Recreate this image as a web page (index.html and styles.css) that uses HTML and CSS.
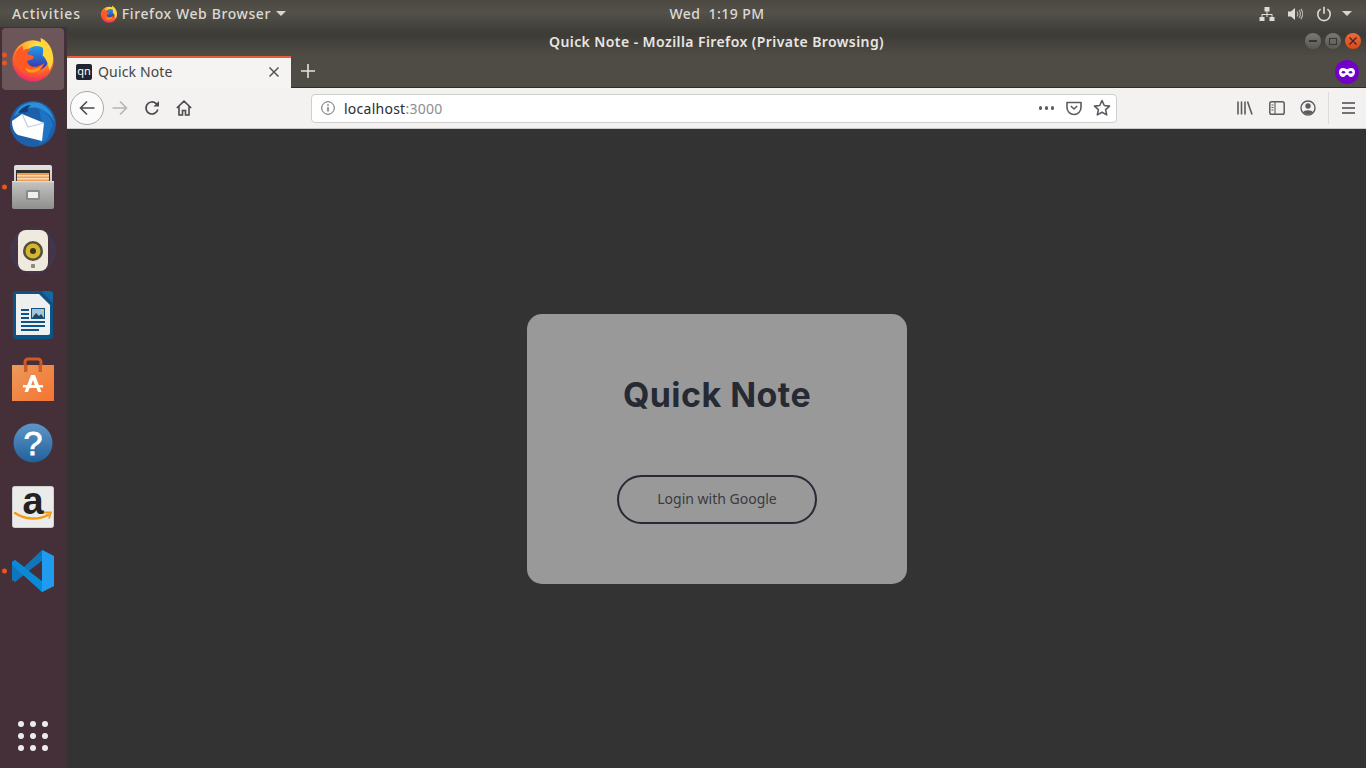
FILE: index.html
```html
<!DOCTYPE html>
<html lang="en">
<head>
<meta charset="utf-8">
<title>Quick Note</title>
<link rel="stylesheet" href="styles.css">
</head>
<body>
<svg class="defs" width="0" height="0" aria-hidden="true">
  <defs>
    <radialGradient id="ffg" cx="0.6" cy="0.15" r="0.95">
      <stop offset="0" stop-color="#ffe847"/>
      <stop offset="0.4" stop-color="#ffa930"/>
      <stop offset="0.7" stop-color="#ff5a2c"/>
      <stop offset="1" stop-color="#e31587"/>
    </radialGradient>
    <linearGradient id="ffb" x1="0" y1="0" x2="0" y2="1">
      <stop offset="0" stop-color="#1f9de6"/>
      <stop offset="1" stop-color="#3a2fa5"/>
    </linearGradient>
    <linearGradient id="drawer" x1="0" y1="0" x2="0" y2="1">
      <stop offset="0" stop-color="#c4c4c2"/>
      <stop offset="1" stop-color="#8f8f8d"/>
    </linearGradient>
    <linearGradient id="cabinet" x1="0" y1="0" x2="0" y2="1">
      <stop offset="0" stop-color="#e2e2e0"/>
      <stop offset="1" stop-color="#a8a8a6"/>
    </linearGradient>
    <linearGradient id="helpg" x1="0" y1="0" x2="0" y2="1">
      <stop offset="0" stop-color="#5d97c9"/>
      <stop offset="1" stop-color="#22609a"/>
    </linearGradient>
    <linearGradient id="bag" x1="0" y1="0" x2="1" y2="1">
      <stop offset="0" stop-color="#ec9a5c"/>
      <stop offset="1" stop-color="#f47430"/>
    </linearGradient>
    <symbol id="firefox" viewBox="0 0 48 48">
      <circle cx="24" cy="26" r="21.500" fill="url(#ffg)"/>
      <circle cx="28" cy="23" r="12.500" fill="url(#ffb)"/>
      <path d="M32 2c7 3 13 11 13 21 0 6-2 10-4 13-1-7-3-12-7-16 1-4 1-8-1-11-1-2-1-5-1-7z" fill="#ffd53a"/>
      <path d="M5 20c2-5 5-8 8-10l1 5c3-2 7-2 9-1-3 1-5 3-5 5 3 1 6 1 7 3-1 3-5 3-7 4 0 4 5 7 10 6 3-1 6-2 8-4-2 7-9 12-17 11C10 38 3 30 5 20z" fill="#ff5a24"/>
      <path d="M16 33c5 3 12 3 18-3-2 6-8 9-13 8-2 0-4-2-5-5z" fill="#ff9d1f"/>
    </symbol>
  </defs>
</svg>
<header class="topbar">
  <div class="topbar-left">
    <span class="top-item activities">Activities</span>
    <span class="top-item app-menu">
      <svg class="app-icon" width="18" height="18"><use href="#firefox"/></svg>
      Firefox Web Browser
      <i class="caret"></i>
    </span>
  </div>
  <div class="clock">Wed&nbsp;&nbsp;1:19 PM</div>
  <div class="topbar-right">
    <svg width="16" height="16" viewBox="0 0 16 16" fill="#dedcd8"><path d="M5.500 1h5v4.500h-5zM7.500 5.500h1V8h5v3h-1V9h-4v2h-1V9h-4v2h-1V8h5zM.5 11h5v4h-5zM10.500 11h5v4h-5z"/></svg>
    <svg width="16" height="16" viewBox="0 0 16 16" fill="none" stroke="#dedcd8"><path d="M1 5.500h3L8 2v12L4 10.500H1z" fill="#dedcd8" stroke="none"/><path d="M10 5.500c1 1.500 1 3.500 0 5M12 4c1.800 2.500 1.800 5.500 0 8M13.800 2.800c2.400 3.200 2.400 7.200 0 10.400" stroke-width="1.200" opacity=".7"/></svg>
    <svg class="power" width="16" height="16" viewBox="0 0 16 16" fill="none" stroke="#dedcd8" stroke-width="1.600"><path d="M4.600 3.200a6.200 6.200 0 1 0 6.800 0M8 .8v7"/></svg>
    <i class="caret end-caret"></i>
  </div>
</header>
<div class="desktop">
  <nav class="dock">
    <div class="dock-list">
      <div class="dock-item active">
        <span class="pips"><i></i><i></i></span>
        <svg width="46" height="46"><use href="#firefox"/></svg>
      </div>
      <div class="dock-item">
        <svg width="48" height="48" viewBox="0 0 48 48">
          <circle cx="24" cy="25" r="23" fill="#1d5fa8"/>
          <path d="M5 17C9 6 20 1 30 4c8 3 14 10 15 19-3-7-8-11-14-13-5-2-11-2-14 1z" fill="#2d8fd8"/>
          <path d="M30 9c7 3 12 9 14 17l-6 14c-3 3-6 4-8 5l4-14z" fill="#1e74c4"/>
          <path d="M9 14c3-5 8-8 13-8-3 2-4 5-3 7z" fill="#0e3e75"/>
          <path d="M3 22l10-7 22 9-2 18-24-6c-4-2-6-8-6-14z" fill="#fff"/>
          <path d="M13 15l6 13 16-4" fill="none" stroke="#c9cfd8" stroke-width="1.200"/>
        </svg>
      </div>
      <div class="dock-item">
        <span class="pips"><i></i></span>
        <svg width="44" height="44" viewBox="0 0 44 44">
          <rect x="3" y="0" width="38" height="42" rx="2" fill="url(#cabinet)"/>
          <rect x="5" y="5" width="34" height="14" fill="#35312e"/>
          <rect x="6" y="8" width="32" height="8" fill="#f19a52"/>
          <rect x="6" y="10" width="32" height="1.500" fill="#fbdcb8"/>
          <rect x="6" y="13" width="32" height="1.500" fill="#fbdcb8"/>
          <path d="M1 16h42v26a2 2 0 0 1-2 2H3a2 2 0 0 1-2-2z" fill="url(#drawer)"/>
          <rect x="1" y="16" width="42" height="1.200" fill="#dcdcda"/>
          <rect x="15" y="25" width="14" height="10" rx="1.500" fill="#8a8a88"/>
          <rect x="17" y="27" width="10" height="6" fill="#efefed"/>
        </svg>
      </div>
      <div class="dock-item">
        <svg width="48" height="48" viewBox="0 0 48 48">
          <circle cx="24" cy="24" r="23" fill="#3e3a55" opacity=".7"/>
          <circle cx="24" cy="24" r="19" fill="#4a3340"/>
          <rect x="9" y="3" width="30" height="41" rx="8" fill="#eeeade"/>
          <circle cx="24" cy="24" r="10" fill="#55503a"/>
          <circle cx="24" cy="24" r="7.500" fill="#d4b72a"/>
          <circle cx="24" cy="24" r="3" fill="#3a3520"/>
          <rect x="22" y="37" width="4" height="4" rx="1" fill="#8e8a80"/>
        </svg>
      </div>
      <div class="dock-item">
        <svg width="40" height="48" viewBox="0 0 40 48">
          <path d="M3 0h25l12 12v33a3 3 0 0 1-3 3H3a3 3 0 0 1-3-3V3a3 3 0 0 1 3-3z" fill="#0c5486"/>
          <path d="M28 0h9a3 3 0 0 1 3 3v9z" fill="#0f6aa8"/>
          <path d="M3 3h23l11 11v28a2 2 0 0 1-2 2H3z" fill="#eef0f0"/>
          <g fill="#0c5486">
            <rect x="8" y="18" width="8" height="2"/><rect x="8" y="22" width="8" height="2"/><rect x="8" y="26" width="8" height="2"/>
            <rect x="8" y="30" width="24" height="2"/><rect x="8" y="34" width="24" height="2"/><rect x="8" y="38" width="18" height="2"/>
            <rect x="18" y="17" width="14" height="11"/>
          </g>
          <rect x="19" y="18" width="12" height="9" fill="#9fc6dd"/>
          <path d="M19 27l4-5 3 3 2-2 3 4z" fill="#33424f"/>
          <circle cx="29" cy="20" r="1.200" fill="#f0c63a"/>
        </svg>
      </div>
      <div class="dock-item">
        <svg width="42" height="44" viewBox="0 0 42 44">
          <path d="M13 10V5a3 3 0 0 1 3-3h10a3 3 0 0 1 3 3v5" fill="none" stroke="#cf5a25" stroke-width="3"/>
          <path d="M0 8h42v36H0z" fill="url(#bag)"/>
          <path d="M12 8v7h3.500V8zM26.500 8v7H30V8z" fill="#cf5a25"/>
          <path d="M19 18h4l6.500 17h-3.500l-1.500-4h-7l-1.500 4H12.500zM21 23l-1.800 5h3.600z" fill="#fff"/>
          <rect x="11" y="28" width="20" height="2.500" fill="#fff"/>
        </svg>
      </div>
      <div class="dock-item">
        <svg width="40" height="40" viewBox="0 0 40 40">
          <circle cx="20" cy="20" r="19.500" fill="url(#helpg)"/>
          <text x="20" y="32" class="help-mark">?</text>
        </svg>
      </div>
      <div class="dock-item">
        <svg class="amazon" width="42" height="42" viewBox="0 0 42 42">
          <rect x=".5" y=".5" width="41" height="41" rx="2" fill="#ebebea" stroke="#d0d0d0"/>
          <text x="21" y="28" class="amazon-mark">a</text>
          <path d="M3 27c10 7 24 7 33 2" fill="none" stroke="#f59a14" stroke-width="2.400" stroke-linecap="round"/>
          <path d="M32 26.500l7 0-2 6" fill="none" stroke="#f59a14" stroke-width="1.800"/>
        </svg>
      </div>
      <div class="dock-item">
        <span class="pips"><i></i></span>
        <svg width="42" height="42" viewBox="0 0 42 42">
          <path d="M30 0l12 6v30l-12 6L12 25 3 32l-3-2v-18l3-2 9 7z" fill="#0f76bd"/>
          <path d="M30 0l12 6v30l-12 6z" fill="#1f9cf0"/>
          <path d="M30 11v20L17 21z" fill="#452f38"/>
          <path d="M0 12l3-2 27 21v11L0 15z" fill="#0a8ad6"/>
          <path d="M30 11v20L17 21z" fill="#452f38"/>
        </svg>
      </div>
    </div>
    <div class="app-grid"><i></i><i></i><i></i><i></i><i></i><i></i><i></i><i></i><i></i></div>
  </nav>
  <div class="window">
    <div class="titlebar">
      <span class="title">Quick Note - Mozilla Firefox (Private Browsing)</span>
      <div class="win-buttons">
        <span class="win-btn"><i class="glyph-min"></i></span>
        <span class="win-btn"><i class="glyph-max"></i></span>
        <span class="win-btn close">
          <svg width="10" height="10" viewBox="0 0 10 10" stroke="#3a2a22" stroke-width="1.300"><path d="M1.500 1.500l7 7M8.500 1.500l-7 7"/></svg>
        </span>
      </div>
    </div>
    <div class="tabstrip">
      <div class="tab">
        <span class="favicon">qn</span>
        <span class="tab-title">Quick Note</span>
        <svg class="tab-close" width="12" height="12" viewBox="0 0 12 12" stroke="#555" stroke-width="1.500"><path d="M1.500 1.500l9 9M10.500 1.500l-9 9"/></svg>
      </div>
      <svg class="new-tab" width="14" height="14" viewBox="0 0 14 14" stroke="#e4e2de" stroke-width="1.600"><path d="M7 0v14M0 7h14"/></svg>
      <span class="private">
        <svg width="16" height="9" viewBox="0 0 18 10" fill="#fff"><path d="M4.500 0C7 0 7.500 1.200 9 1.200S11 0 13.500 0C16.500 0 18 2 18 4.500S16.500 10 13.500 10C11 10 10.500 7.500 9 7.500S7 10 4.500 10C1.500 10 0 7 0 4.500S1.500 0 4.500 0z"/><ellipse cx="5" cy="4.800" rx="2" ry="1.400" fill="#7200c9"/><ellipse cx="13" cy="4.800" rx="2" ry="1.400" fill="#7200c9"/></svg>
      </span>
    </div>
    <div class="navbar">
      <span class="back">
        <svg width="16" height="16" viewBox="0 0 16 16" fill="none" stroke="#4a4a4f" stroke-width="1.600"><path d="M15.500 8H1.500M8 1.500L1.500 8 8 14.500"/></svg>
      </span>
      <svg class="forward" width="16" height="16" viewBox="0 0 16 16" fill="none" stroke="#b5b5b5" stroke-width="1.600"><path d="M.5 8h14M8 1.500L14.500 8 8 14.500"/></svg>
      <svg class="reload" width="16" height="16" viewBox="0 0 16 16" fill="none" stroke="#4a4a4f" stroke-width="1.700"><path d="M13.800 9.500A6 6 0 1 1 12 3.500l2 2"/><path d="M15 1v5.500H9.500z" fill="#4a4a4f" stroke="none"/></svg>
      <svg class="home" width="16" height="16" viewBox="0 0 16 16" fill="none" stroke="#4a4a4f" stroke-width="1.600"><path d="M.8 8L8 1.200 15.200 8M3 6.500V15h3.500v-4.500h3V15H13V6.500"/></svg>
      <div class="urlbar">
        <svg class="info" width="14" height="14" viewBox="0 0 14 14" fill="none" stroke="#666"><circle cx="7" cy="7" r="6.300"/><path d="M7 6v4.500M7 3.300v1.500" stroke-width="1.300"/></svg>
        <span class="url">localhost<span class="port">:3000</span></span>
        <span class="dots"><i></i><i></i><i></i></span>
        <svg width="16" height="16" viewBox="0 0 16 16" fill="none" stroke="#5c5c60" stroke-width="1.600"><path d="M1 2.500h14v5a7 7 0 0 1-14 0z" stroke-linejoin="round"/><path d="M4.800 6L8 9l3.200-3"/></svg>
        <svg class="star" width="18" height="18" viewBox="0 0 18 18" fill="none" stroke="#5c5c60" stroke-width="1.600"><path d="M9 1.500l2.300 5 5.200.6-3.900 3.500 1.100 5.300L9 13.200l-4.700 2.700 1.100-5.300L1.500 7.100l5.200-.6z" stroke-linejoin="round"/></svg>
      </div>
      <div class="tools">
        <svg width="16" height="16" viewBox="0 0 16 16" stroke="#5c5c60" stroke-width="1.600"><path d="M1 1.500v13M4.500 1.500v13M8 1.500v13M10.500 1.500l4.500 13"/></svg>
        <svg width="16" height="14" viewBox="0 0 16 14" fill="none" stroke="#5c5c60" stroke-width="1.500"><rect x=".8" y=".8" width="14.400" height="12.400" rx="1.800"/><path d="M6 1v12M2.500 4h2M2.500 6.500h2M2.500 9h2" stroke-width="1.100"/></svg>
        <svg width="16" height="16" viewBox="0 0 16 16" fill="none" stroke="#5c5c60" stroke-width="1.400"><circle cx="8" cy="8" r="7"/><circle cx="8" cy="6" r="2.700" fill="#5c5c60" stroke="none"/><path d="M3 12.500c1-3 9-3 10 0-2 2.200-8 2.200-10 0z" fill="#5c5c60" stroke="none"/></svg>
        <span class="divider"></span>
        <svg width="13" height="12" viewBox="0 0 13 12" stroke="#4a4a4f" stroke-width="1.700"><path d="M0 1h13M0 6h13M0 11h13"/></svg>
      </div>
    </div>
    <main class="content">
      <section class="card">
        <h1 class="card-title">Quick Note</h1>
        <button class="login" type="button"><span class="login-label">Login with Google</span></button>
      </section>
    </main>
  </div>
</div>
</body>
</html>
```
FILE: styles.css
```css
* { box-sizing: border-box; }
html, body { margin: 0; height: 100%; overflow: hidden; }
body {
  width: 1366px;
  height: 768px;
  display: flex;
  flex-direction: column;
  font-family: "Noto Sans", "Open Sans", sans-serif;
  background: #333;
}
.defs { position: absolute; }
i { display: block; }

.topbar {
  height: 27px;
  flex: none;
  display: grid;
  grid-template-columns: 1fr auto 1fr;
  align-items: center;
  background: linear-gradient(#4b4842, #54514a 45%, #44423c);
  color: #dcdad5;
  font-size: 14px;
  font-weight: 500;
}
.topbar-left { display: flex; align-items: center; padding-left: 12px; gap: 19px; }
.top-item { display: flex; align-items: center; white-space: nowrap; }
.activities { letter-spacing: .85px; }
.app-menu { gap: 4px; letter-spacing: .6px; }
.caret {
  width: 0; height: 0;
  border-left: 5px solid transparent;
  border-right: 5px solid transparent;
  border-top: 5px solid #d8d6d1;
}
.app-menu .caret { margin-left: 1px; }
.clock { font-size: 14px; font-weight: 500; letter-spacing: .45px; position: relative; left: 34px; }
.topbar-right { display: flex; justify-content: flex-end; align-items: center; gap: 12px; padding-right: 14px; }
.power { margin-left: 1px; }
.end-caret { margin-left: -2px; }

.desktop { flex: 1; display: flex; min-height: 0; }

.dock {
  width: 67px;
  flex: none;
  display: flex;
  flex-direction: column;
  justify-content: space-between;
  background: #452f38;
  border-right: 1px solid #3d3438;
  padding: 1px 0 17px 2px;
}
.dock-list { display: flex; flex-direction: column; gap: 2px; }
.dock-item {
  position: relative;
  width: 62px;
  height: 62px;
  display: flex;
  align-items: center;
  justify-content: center;
  border-radius: 4px;
}
.dock-item.active { background: #6d565a; }
.pips {
  position: absolute;
  left: 0;
  top: 50%;
  transform: translateY(-50%);
  display: flex;
  flex-direction: column;
  gap: 3px;
}
.pips i { width: 5px; height: 5px; border-radius: 50%; background: #e9541f; }
.help-mark { font: 400 34px "Liberation Sans", sans-serif; fill: #fff; text-anchor: middle; stroke: #fff; stroke-width: .8px; }
.amazon { overflow: visible; }
.amazon-mark { font: 700 38px/1 "Liberation Sans", sans-serif; fill: #222; text-anchor: middle; }

.app-grid {
  display: grid;
  grid-template-columns: repeat(3, 6px);
  gap: 6px;
  margin-left: 16px;
}
.app-grid i { width: 6px; height: 6px; border-radius: 50%; background: #ececec; }

.window { flex: 1; min-width: 0; display: flex; flex-direction: column; }

.titlebar {
  height: 29px;
  flex: none;
  position: relative;
  display: flex;
  align-items: center;
  justify-content: center;
  background: linear-gradient(#44423c, #3d3b36 25%, #4f4c45);
  color: #e8e6e2;
  font-size: 14px;
  font-weight: 600;
}
.title { letter-spacing: .42px; }
.win-buttons { position: absolute; right: 5px; top: 6px; display: flex; gap: 4px; }
.win-btn {
  width: 16px; height: 16px;
  border-radius: 50%;
  background: linear-gradient(#7a7872, #5a5852);
  display: flex;
  align-items: center;
  justify-content: center;
}
.win-btn.close { background: linear-gradient(#f0693a, #d9481c); }
.glyph-min { width: 8px; height: 1.500px; background: #38362f; }
.glyph-max { width: 8px; height: 7px; border: 1.200px solid #38362f; }

.tabstrip {
  height: 32px;
  flex: none;
  display: flex;
  align-items: center;
  background: #4f4c45;
  position: relative;
  border-bottom: 1px solid #2f2d29;
}
.tab {
  width: 224px;
  height: 32px;
  align-self: flex-start;
  background: #f5f4f2;
  border-top: 2px solid #e95e36;
  display: flex;
  align-items: center;
  padding: 0 11px 3px 9px;
  color: #444;
  font-size: 14px;
}
.favicon {
  width: 16px; height: 16px;
  background: #1f2430;
  color: #fff;
  font-size: 11px;
  line-height: 13px;
  text-align: center;
  border-radius: 2px;
  margin-right: 6px;
}
.tab-title { flex: 1; letter-spacing: .15px; }
.new-tab { margin: 0 0 1px 10px; }
.private {
  position: absolute;
  right: 7px;
  top: 4px;
  width: 24px; height: 24px;
  border-radius: 50%;
  background: #7200c9;
  display: flex;
  align-items: center;
  justify-content: center;
}

.navbar {
  height: 41px;
  flex: none;
  display: flex;
  align-items: center;
  background: #f3f2f0;
  border-bottom: 1px solid #c9c8c5;
  padding-left: 3px;
}
.back {
  width: 34px; height: 34px;
  border-radius: 50%;
  border: 1px solid #a9a9a9;
  background: #fbfbfb;
  display: flex;
  align-items: center;
  justify-content: center;
  flex: none;
}
.forward { margin-left: 8px; flex: none; }
.reload { margin-left: 16px; flex: none; }
.home { margin-left: 16px; flex: none; }
.urlbar {
  width: 806px;
  height: 29px;
  margin-left: 119px;
  flex: none;
  background: #fff;
  border: 1px solid #cfcfcd;
  border-radius: 4px;
  display: flex;
  align-items: center;
  padding: 0 5px 0 9px;
  color: #2b2b30;
  font-size: 14px;
}
.url { margin-left: 9px; flex: 1; letter-spacing: .25px; }
.port { color: #8d8d90; }
.dots { display: flex; gap: 2.500px; margin-right: 12px; }
.dots i { width: 3.500px; height: 3.500px; border-radius: 50%; background: #5c5c60; }
.star { margin-left: 11px; }
.tools { flex: 1; display: flex; align-items: center; padding-left: 120px; gap: 15.500px; }
.divider { width: 1px; height: 32px; background: #dddcda; margin-left: -4px; margin-right: -2.500px; }

.content {
  flex: 1;
  display: flex;
  align-items: flex-start;
  justify-content: center;
  background: #333;
  padding-top: 185px;
  padding-left: 1px;
}
.card {
  width: 380px;
  height: 270px;
  background: #999;
  border-radius: 15px;
  display: flex;
  flex-direction: column;
  align-items: center;
  padding-top: 59px;
}
.card-title {
  margin: 0;
  font-family: Inter, "Noto Sans", sans-serif;
  font-size: 34px;
  line-height: 44px;
  font-weight: 700;
  color: #252a35;
  letter-spacing: .45px;
}
.login {
  margin-top: 58px;
  width: 200px;
  height: 49px;
  border: 2px solid #252a35;
  border-radius: 25px;
  background: transparent;
  color: #3a3a40;
  font-family: "Noto Sans", sans-serif;
  font-size: 14px;
  padding: 0 0 2px;
}
.login-label { display: block; }
```
